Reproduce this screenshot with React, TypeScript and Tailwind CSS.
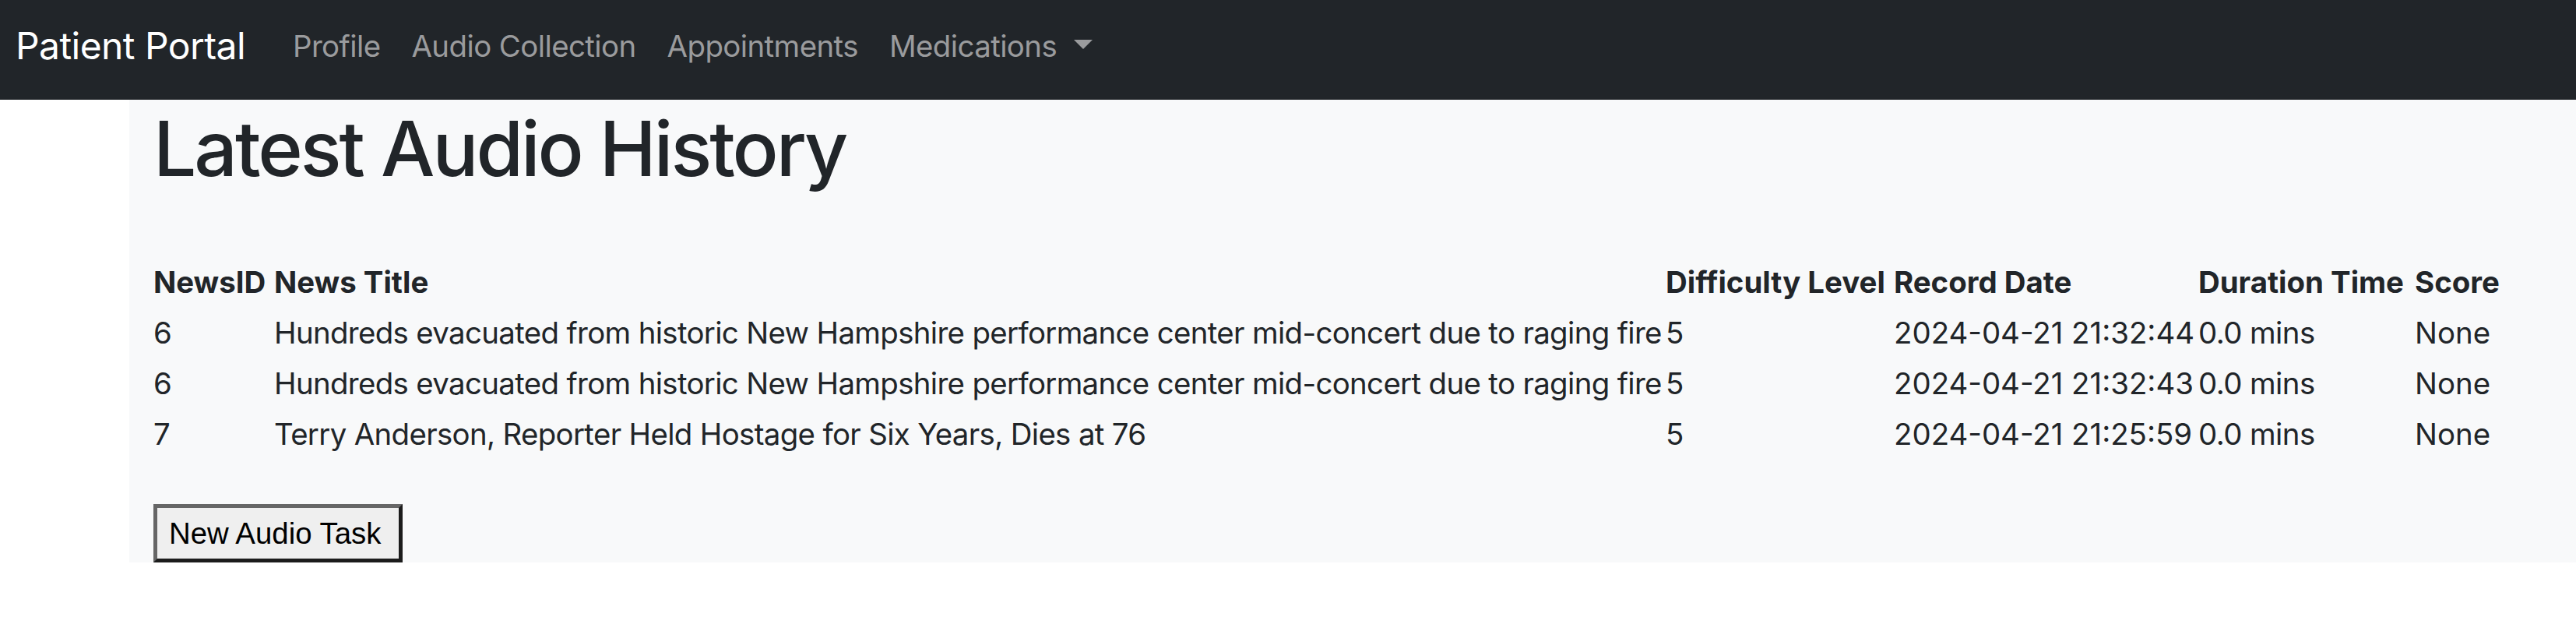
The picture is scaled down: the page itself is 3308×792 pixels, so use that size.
import React from 'react';

const rows = [
  { id: 6, title: 'Hundreds evacuated from historic New Hampshire performance center mid-concert due to raging fire', level: 5, date: '2024-04-21 21:32:44', duration: '0.0 mins', score: 'None' },
  { id: 6, title: 'Hundreds evacuated from historic New Hampshire performance center mid-concert due to raging fire', level: 5, date: '2024-04-21 21:32:43', duration: '0.0 mins', score: 'None' },
  { id: 7, title: 'Terry Anderson, Reporter Held Hostage for Six Years, Dies at 76', level: 5, date: '2024-04-21 21:25:59', duration: '0.0 mins', score: 'None' },
];

const navLinks = ['Profile', 'Audio Collection', 'Appointments'];

export default function App() {
  return (
    <div className="min-h-[792px] w-full bg-white font-['Inter','Liberation_Sans',sans-serif] text-[#212529]">
      <nav className="flex h-[128px] items-start bg-[#212529] pl-[20px] pt-[29px]">
        <a className="mr-[41px] text-[48px] leading-[60px] tracking-[-0.012em] text-white">Patient Portal</a>
        <ul className="flex items-start">
          {navLinks.map((l) => (
            <li key={l} className="px-[20px] text-[38.4px] leading-[60px] tracking-[-0.015em] text-[#9a9b9d]">{l}</li>
          ))}
          <li className="flex items-start px-[20px] text-[38.4px] leading-[60px] tracking-[-0.015em] text-[#9a9b9d]">
            Medications
            <span className="ml-[22px] mt-[22px] inline-block h-0 w-0 border-x-[12px] border-t-[12px] border-x-transparent border-t-[#9a9b9d]" />
          </li>
        </ul>
      </nav>

      <main className="ml-[166px] bg-[#f8f9fa] pl-[31px] pt-[4px]">
        <h1 className="text-[98px] font-medium leading-[1.2] tracking-[-0.031em]">Latest Audio History</h1>

        <table className="mt-[80px] w-[3024px] table-fixed border-collapse text-[38.4px] leading-[65px]">
          <colgroup>
            <col className="w-[155px]" />
            <col className="w-[1787px]" />
            <col className="w-[293px]" />
            <col className="w-[391px]" />
            <col className="w-[278px]" />
            <col className="w-[120px]" />
          </colgroup>
          <thead>
            <tr className="text-left font-bold">
              <th className="whitespace-nowrap p-0">NewsID</th>
              <th className="whitespace-nowrap p-0">News Title</th>
              <th className="whitespace-nowrap p-0">Difficulty Level</th>
              <th className="whitespace-nowrap p-0">Record Date</th>
              <th className="whitespace-nowrap p-0">Duration Time</th>
              <th className="whitespace-nowrap p-0">Score</th>
            </tr>
          </thead>
          <tbody>
            {rows.map((r, i) => (
              <tr key={i}>
                <td className="whitespace-nowrap p-0">{r.id}</td>
                <td className="whitespace-nowrap p-0 tracking-[-0.017em]">{r.title}</td>
                <td className="whitespace-nowrap p-0">{r.level}</td>
                <td className="whitespace-nowrap p-0">{r.date}</td>
                <td className="whitespace-nowrap p-0 tracking-[-0.015em]">{r.duration}</td>
                <td className="whitespace-nowrap p-0">{r.score}</td>
              </tr>
            ))}
          </tbody>
        </table>

        <button
          type="button"
          className="mt-[57px] block h-[75px] w-[320px] whitespace-nowrap border-[5px] border-b-[#1c1c1c] border-l-[#666666] border-r-[#1c1c1c] border-t-[#666666] bg-[#efefef] px-[15px] pt-[3px] text-left font-['Liberation_Sans',Arial,sans-serif] text-[38.4px] leading-none text-black"
        >
          New Audio Task
        </button>
      </main>
    </div>
  );
}
